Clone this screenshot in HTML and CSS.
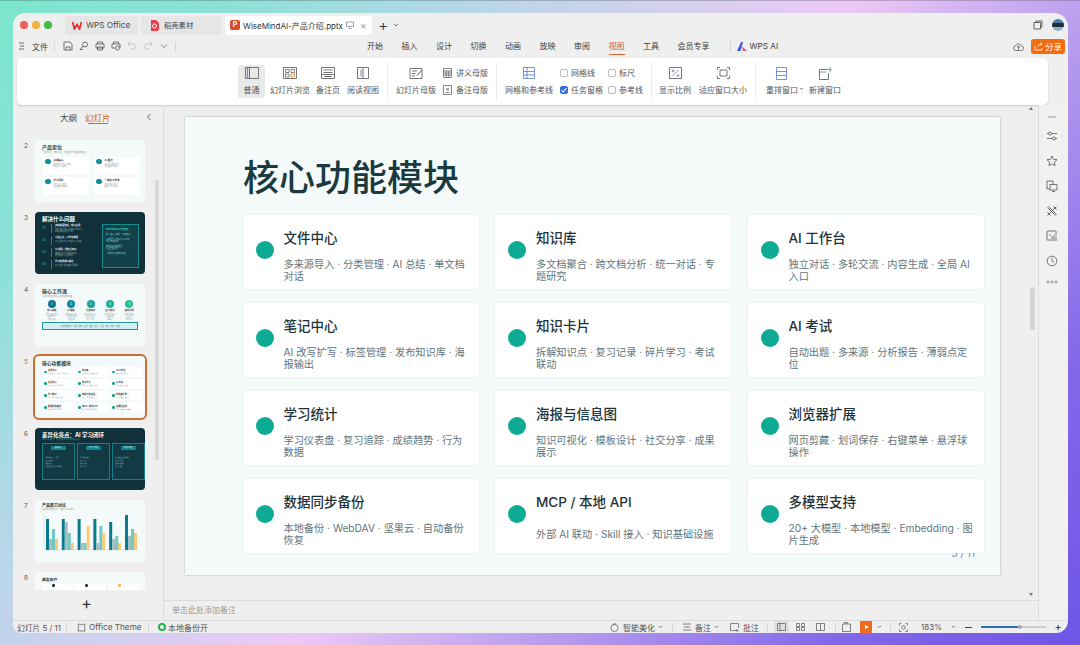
FILE: index.html
```html
<!DOCTYPE html>
<html lang="zh-CN">
<head>
<meta charset="utf-8">
<title>WiseMindAI-产品介绍.pptx</title>
<link rel="stylesheet" href="styles.css">
</head>
<body>
<div class="window">
  <header class="tabbar">
    <div class="lights"><i class="red"></i><i class="yellow"></i><i class="green"></i></div>
    <div class="tab tab-wps">
      <svg width="10" height="9" viewBox="0 0 10 9"><path d="M.5 1 2.500 8 5 3.500 7.500 8 9.500 1" fill="none" stroke="#e0322b" stroke-width="1.800"/></svg>
      <span>WPS Office</span>
    </div>
    <div class="tab tab-daoke">
      <svg width="9" height="11" viewBox="0 0 9 11"><path d="M1 0h5l3 3v6a2 2 0 0 1-2 2H1z" fill="#ec3f52"/><circle cx="4.500" cy="6" r="2" fill="none" stroke="#fff"/></svg>
      <span>稻壳素材</span>
    </div>
    <div class="tab tab-active">
      <span class="ppt-badge">P</span>
      <span class="tab-name">WiseMindAI-产品介绍.pptx</span>
      <svg width="8" height="8" viewBox="0 0 8 8"><path d="M.5 1h7v4.500h-7zM2.500 7.500h3" fill="none" stroke="#777" stroke-width=".7"/></svg>
      <span class="tab-close">×</span>
    </div>
    <span class="tab-plus">+</span>
    <svg class="caret" width="6" height="4" viewBox="0 0 6 4"><path d="M1 1l2 2 2-2" fill="none" stroke="#555" stroke-width=".8"/></svg>
    <div class="tabbar-end">
      <svg width="10" height="10" viewBox="0 0 10 10"><path d="M1 2.500h6.500V9H1zM3 2.500V1h6v6H7.500" fill="none" stroke="#555" stroke-width=".9"/></svg>
      <span class="avatar"></span>
    </div>
  </header>

  <nav class="menubar">
    <div class="quick">
      <svg class="hamburger" width="6" height="8" viewBox="0 0 6 8"><path d="M0 1h5M1 4h4M0 7h5" stroke="#444" stroke-width=".8"/></svg>
      <span class="file-label">文件</span>
      <i class="vsep v-file"></i>
      <svg class="qi q1" width="10" height="10" viewBox="0 0 10 10"><path d="M1 1h6l2 2v6H1zM3 9V6h4v3" fill="none" stroke="#555" stroke-width=".8"/></svg>
      <svg class="qi" width="10" height="10" viewBox="0 0 10 10"><circle cx="6" cy="3.500" r="2.500" fill="none" stroke="#555" stroke-width=".8"/><path d="M4 5 1 8.500h3" fill="none" stroke="#555" stroke-width=".8"/></svg>
      <svg class="qi" width="10" height="10" viewBox="0 0 10 10"><path d="M2.500 3V1h5v2M1 3h8v4H1zM2.500 6h5v3h-5z" fill="none" stroke="#555" stroke-width=".8"/></svg>
      <svg class="qi" width="10" height="10" viewBox="0 0 10 10"><path d="M2.500 3V1h5v2M1 3h8v4H1z" fill="none" stroke="#555" stroke-width=".8"/><circle cx="6.500" cy="7" r="2" fill="#efefef" stroke="#555" stroke-width=".8"/></svg>
      <svg class="qi" width="10" height="10" viewBox="0 0 10 10"><path d="M3 1 1 3l2 2M1 3h5a2.500 2.500 0 0 1 0 5H4" fill="none" stroke="#bbb" stroke-width=".8"/></svg>
      <svg class="qi" width="10" height="10" viewBox="0 0 10 10"><path d="M7 1l2 2-2 2M9 3H4a2.500 2.500 0 0 0 0 5h2" fill="none" stroke="#bbb" stroke-width=".8"/></svg>
      <svg class="qi" width="10" height="10" viewBox="0 0 10 10"><path d="M2 3.500l3 3 3-3" fill="none" stroke="#666" stroke-width=".8"/></svg>
      <i class="vsep v-quick"></i>
    </div>
    <div class="menus">
      <span>开始</span><span>插入</span><span>设计</span><span>切换</span><span>动画</span><span>放映</span><span>审阅</span><span class="menu-on">视图</span><span>工具</span><span>会员专享</span>
    </div>
    <i class="vsep v-ai"></i>
    <div class="wps-ai">
      <svg width="10" height="9" viewBox="0 0 10 9"><path d="M0 9 4 0h2L3.500 9z" fill="#3c5be0"/><path d="M5 4.500 10 9H6z" fill="#e94b8a"/></svg>
      <span>WPS AI</span>
    </div>
    <div class="menu-end">
      <svg width="11" height="9" viewBox="0 0 11 9"><path d="M3 8.500a2.300 2.300 0 0 1-.3-4.600 3 3 0 0 1 5.700 0 2.300 2.300 0 0 1-.3 4.600zM5.500 8V4M4 5.400 5.500 4 7 5.400" fill="none" stroke="#666" stroke-width=".8"/></svg>
      <button class="share">
        <svg width="9" height="9" viewBox="0 0 9 9"><path d="M1 4v4h7V6M4 5c0-2 1.500-3 4-3M6.500.5 8 2 6.500 3.500" fill="none" stroke="#fff" stroke-width=".8"/></svg>
        分享
      </button>
    </div>
  </nav>

  <section class="ribbon">
    <div class="rb rb-on w27">
      <svg width="14" height="12" viewBox="0 0 14 12"><path d="M.5.500h13v11H.500zM4.500.500v11" fill="none" stroke="#555" stroke-width=".8"/><path d="M2.500 1v10" stroke="#6d86d8" stroke-width="1.200"/></svg>
      <span>普通</span>
    </div>
    <div class="rb w44 ml3">
      <svg width="14" height="12" viewBox="0 0 14 12"><path d="M.5.500h13v11H.500z" fill="none" stroke="#555" stroke-width=".8"/><path d="M2.500 2.500h3.500v3H2.500zM8 2.500h3.500v3H8zM2.500 7h3.500v3H2.500z" fill="none" stroke="#555" stroke-width=".7"/><path d="M8 7h3.500v3H8z" fill="none" stroke="#d98a3a" stroke-width=".8"/></svg>
      <span>幻灯片浏览</span>
    </div>
    <div class="rb w28 ml2">
      <svg width="14" height="12" viewBox="0 0 14 12"><path d="M.5.500h13v11H.500zM2.500 3h9M2.500 5.500h9M.5 7.500h13M3 9.500h8" fill="none" stroke="#555" stroke-width=".8"/></svg>
      <span>备注页</span>
    </div>
    <div class="rb w36 ml3">
      <svg width="12" height="12" viewBox="0 0 12 12"><path d="M.5.500h11v11H.500zM6 1v10" fill="none" stroke="#555" stroke-width=".8"/><path d="M4 2.500v7" stroke="#6d86d8" stroke-width="1"/></svg>
      <span>阅读视图</span>
    </div>
    <i class="rsep ml6"></i>
    <div class="rb w44 ml6">
      <svg width="14" height="13" viewBox="0 0 14 13"><path d="M1 1.500h12v10H1zM3 4h5M3 6.500h3.500M3 9h3" fill="none" stroke="#555" stroke-width=".8"/><path d="M13 3 8 8.500" stroke="#555" stroke-width="1"/></svg>
      <span>幻灯片母版</span>
    </div>
    <div class="rb-stack ml5">
      <div class="rb-line">
        <svg width="9" height="10" viewBox="0 0 9 10"><path d="M.5.500h8v9h-8zM.5 3h8M.5 5h8M.5 7h8M3.200 3v6.500M5.800 3v6.500" fill="none" stroke="#555" stroke-width=".7"/></svg>
        <span>讲义母版</span>
      </div>
      <div class="rb-line">
        <svg width="9" height="10" viewBox="0 0 9 10"><path d="M.5.500h8v9h-8zM2.500 7.500h4" fill="none" stroke="#555" stroke-width=".7"/><path d="M3 3h3v2.500H3z" fill="#aaa"/></svg>
        <span>备注母版</span>
      </div>
    </div>
    <i class="rsep ml8"></i>
    <div class="rb w50 ml7">
      <svg width="12" height="12" viewBox="0 0 12 12"><path d="M.5.500h11v11H.500zM.5 4.500h11M.5 8h11M4 .5v11" fill="none" stroke="#5577cc" stroke-width=".8"/></svg>
      <span>网格和参考线</span>
    </div>
    <div class="checks ml6">
      <label class="ck"><i class="box"></i>网格线</label>
      <label class="ck"><i class="box box-on"><svg width="8" height="8" viewBox="0 0 8 8"><path d="M1.500 4 3.300 6 6.500 2" fill="none" stroke="#fff" stroke-width="1.100"/></svg></i>任务窗格</label>
    </div>
    <div class="checks ml5">
      <label class="ck"><i class="box"></i>标尺</label>
      <label class="ck"><i class="box"></i>参考线</label>
    </div>
    <i class="rsep ml8"></i>
    <div class="rb w34 ml6">
      <svg width="13" height="12" viewBox="0 0 13 12"><path d="M.5.500h12v11H.500z" fill="none" stroke="#555" stroke-width=".8"/><path d="M3.500 9 9.500 3" stroke="#5577cc" stroke-width=".8"/><circle cx="4" cy="4" r="1" fill="none" stroke="#555" stroke-width=".6"/><circle cx="9" cy="8.500" r="1" fill="none" stroke="#555" stroke-width=".6"/></svg>
      <span>显示比例</span>
    </div>
    <div class="rb w50 ml6">
      <svg width="13" height="12" viewBox="0 0 13 12"><path d="M.5 3V.5H3M10 .5h2.500V3M12.500 9v2.500H10M3 11.500H.5V9M3 3h7v6H3z" fill="none" stroke="#555" stroke-width=".8"/></svg>
      <span>适应窗口大小</span>
    </div>
    <i class="rsep ml7"></i>
    <div class="rb w42 ml8">
      <svg class="rb-shift" width="11" height="13" viewBox="0 0 11 13"><path d="M.5.500h10v12H.500z" fill="none" stroke="#5577cc" stroke-width=".8"/><path d="M.5 4.500h10M.5 8.500h10" stroke="#5577cc" stroke-width=".8"/></svg>
      <span class="rb-caret">重排窗口<svg width="5" height="4" viewBox="0 0 5 4"><path d="M1 1l1.500 1.500L4 1" fill="none" stroke="#555" stroke-width=".7"/></svg></span>
    </div>
    <div class="rb w34 ml2">
      <svg width="13" height="13" viewBox="0 0 13 13"><path d="M9 2.500H.5v10h9V6" fill="none" stroke="#555" stroke-width=".8"/><path d="M.5 5h7M11 0v5M8.500 2.500h4.500" stroke="#3aa66b" stroke-width=".8"/></svg>
      <span>新建窗口</span>
    </div>
  </section>

  <main class="main">
    <aside class="sidebar">
      <div class="side-head">
        <span>大纲</span><span class="side-on">幻灯片</span>
        <svg class="side-back" width="6" height="8" viewBox="0 0 6 8"><path d="M4.500 1 1.500 4l3 3" fill="none" stroke="#555" stroke-width=".9"/></svg>
      </div>
      <div class="side-scroll"></div>
      <div class="thumbs">
        <div class="trow"><span class="tnum">2</span>
          <div class="thumb light">
            <b class="t-title">产品定位</b>
            <p class="t-sub">一站式学习、知识管理、内容生成与考试训练平台</p>
            <div class="t2-grid">
              <div class="t2-card"><i></i><div><b>多源输入</b><p>本地文件 网页 笔记<br>知识库 AI 总结</p></div></div>
              <div class="t2-card"><i></i><div><b>AI 能力</b><p>多模型 本地模型<br>内容生成 考试</p></div></div>
              <div class="t2-card"><i></i><div><b>学习闭环</b><p>卡片 复习 统计<br>成绩趋势 薄弱点</p></div></div>
              <div class="t2-card"><i></i><div><b>一体化工作流</b><p>收集 整理 学习<br>输出 分享 备份</p></div></div>
            </div>
          </div>
        </div>
        <div class="trow"><span class="tnum">3</span>
          <div class="thumb dark">
            <b class="t-title t-white">解决什么问题</b>
            <div class="t3-body">
              <div class="t3-list">
                <div class="t3-row"><em>01</em><div><b>资料散落各处，难以复用</b><p>文件 笔记 网页分散在不同工具<br>查找和整理耗费时间</p></div></div>
                <div class="t3-row"><em>02</em><div><b>工具太多，工作流断裂</b><p>阅读 总结 学习 考试 分享 切换</p></div></div>
                <div class="t3-row"><em>03</em><div><b>AI 通用，但缺乏知识</b><p>通用模型不了解你的资料<br>结果难以沉淀为知识</p></div></div>
                <div class="t3-row"><em>04</em><div><b>学习效果难以量化</b><p>复习进度 成绩趋势 薄弱点</p></div></div>
              </div>
              <div class="t3-box"><b>WiseMindAI 的答案</b><p>把「资料」变成「可用知识」</p><p>多来源聚合 知识库 AI 对话<br>卡片 考试 统计</p><p>本地优先 数据安全<br>模型自由选择</p><p>一站式学习和知识平台</p></div>
            </div>
          </div>
        </div>
        <div class="trow"><span class="tnum">4</span>
          <div class="thumb light">
            <b class="t-title">核心工作流</b>
            <p class="t-sub">从资料收集到知识沉淀的完整链路</p>
            <div class="t4-flow">
              <div class="t4-step"><i class="c1">1</i><b>导入资料</b><p>文件 网页 笔记<br>多来源导入<br>自动分类</p></div>
              <div class="t4-step"><i class="c2">2</i><b>AI 解析</b><p>总结 提取 标签<br>单文档对话<br>内容生成</p></div>
              <div class="t4-step"><i class="c3">3</i><b>沉淀知识</b><p>知识库 知识卡片<br>多文档分析<br>统一对话</p></div>
              <div class="t4-step"><i class="c4">4</i><b>复习考试</b><p>自动出题 复习<br>分析报告<br>薄弱点</p></div>
              <div class="t4-step"><i class="c5">5</i><b>输出分享</b><p>海报 信息图<br>社交分享<br>成果展示</p></div>
            </div>
            <div class="t4-note">AI 贯穿全流程：对话、总结、出题、生成、检索、分析、润色、翻译、海报</div>
          </div>
        </div>
        <div class="trow"><span class="tnum tnum-on">5</span>
          <div class="thumb light thumb-on">
            <b class="t-title t5-title">核心功能模块</b>
            <div class="t5-grid">
              <div class="t5-card"><i></i><div><b>文件中心</b><p>多来源导入 分类管理 AI 总结</p></div></div>
              <div class="t5-card"><i></i><div><b>知识库</b><p>多文档聚合 跨文档分析</p></div></div>
              <div class="t5-card"><i></i><div><b>AI 工作台</b><p>独立对话 多轮交流</p></div></div>
              <div class="t5-card"><i></i><div><b>笔记中心</b><p>AI 改写扩写 标签管理</p></div></div>
              <div class="t5-card"><i></i><div><b>知识卡片</b><p>拆解知识点 复习记录</p></div></div>
              <div class="t5-card"><i></i><div><b>AI 考试</b><p>自动出题 多来源</p></div></div>
              <div class="t5-card"><i></i><div><b>学习统计</b><p>学习仪表盘 复习追踪</p></div></div>
              <div class="t5-card"><i></i><div><b>海报与信息图</b><p>知识可视化 模板设计</p></div></div>
              <div class="t5-card"><i></i><div><b>浏览器扩展</b><p>网页剪藏 划词保存</p></div></div>
              <div class="t5-card"><i></i><div><b>数据同步备份</b><p>本地备份 WebDAV</p></div></div>
              <div class="t5-card"><i></i><div><b>MCP / 本地 API</b><p>外部 AI 联动 Skill 接入</p></div></div>
              <div class="t5-card"><i></i><div><b>多模型支持</b><p>20+ 大模型 本地模型</p></div></div>
            </div>
          </div>
        </div>
        <div class="trow"><span class="tnum">6</span>
          <div class="thumb dark">
            <b class="t-title t-white t6-title">差异化亮点：AI 学习闭环</b>
            <p class="t-sub t6-sub">从输入到输出，形成完整的学习和知识闭环</p>
            <div class="t6-cols">
              <div class="t6-col"><span>资料输入</span><p>本地文件 网页 笔记<br>多来源聚合<br>智能分类<br>支持多种格式 自动解析</p></div>
              <div class="t6-col"><span>学习与理解</span><p>AI 对话 总结<br>知识卡片<br>复习记录<br>碎片学习</p></div>
              <div class="t6-col"><span>考试与输出</span><p>自动出题 分析报告<br>薄弱点定位<br>海报 信息图<br>社交分享</p></div>
            </div>
          </div>
        </div>
        <div class="trow"><span class="tnum">7</span>
          <div class="thumb light">
            <b class="t-title t7-title">产品能力对比</b>
            <p class="t-sub">综合能力维度对比，数据为示意评分</p>
            <svg class="t7-chart" width="100" height="42" viewBox="5 0 100 42">
              <path d="M7 1v36h94" fill="none" stroke="#bcc" stroke-width=".4"/>
              <g fill="#0b7a8c"><rect x="9" y="6" width="3" height="31"/><rect x="24.800" y="6" width="3" height="31"/><rect x="40.600" y="6" width="3" height="31"/><rect x="56.400" y="6" width="3" height="31"/><rect x="72.200" y="9" width="3" height="28"/><rect x="88" y="2" width="3" height="35"/></g>
              <g fill="#a3bfc4"><rect x="12" y="26" width="3" height="11"/><rect x="27.800" y="9" width="3" height="28"/><rect x="43.600" y="30" width="3" height="7"/><rect x="59.400" y="30" width="3" height="7"/><rect x="75.200" y="26" width="3" height="11"/><rect x="91" y="23" width="3" height="14"/></g>
              <g fill="#6fcac2"><rect x="15" y="16" width="3" height="21"/><rect x="30.800" y="20" width="3" height="17"/><rect x="46.600" y="30" width="3" height="7"/><rect x="62.400" y="13" width="3" height="24"/><rect x="78.200" y="23" width="3" height="14"/><rect x="94" y="16" width="3" height="21"/></g>
              <g fill="#f8ca7e"><rect x="18" y="26" width="3" height="11"/><rect x="33.800" y="30" width="3" height="7"/><rect x="49.600" y="13" width="3" height="24"/><rect x="65.200" y="20" width="3" height="17"/><rect x="81" y="30" width="3" height="7"/><rect x="97" y="20" width="3" height="17"/></g>
            </svg>
          </div>
        </div>
        <div class="trow"><span class="tnum">8</span>
          <div class="thumb light">
            <b class="t-title t8-title">典型用户</b>
            <div class="t8-cards"><div><i class="d-navy"></i></div><div><i class="d-navy"></i></div><div><i class="d-gold"></i></div></div>
          </div>
        </div>
      </div>
      <div class="side-add">+</div>
    </aside>

    <div class="center">
      <div class="stage">
        <span class="s-arrow s-up"></span>
        <span class="s-thumb"></span>
        <span class="s-arrow s-down"></span>
        <article class="slide">
          <h1>核心功能模块</h1>
          <span class="page-no">5 / 11</span>
          <div class="grid">
            <div class="card"><i class="dot"></i><div class="ctext"><h2>文件中心</h2><p class="desc">多来源导入 · 分类管理 · AI 总结 · 单文档对话</p></div></div>
            <div class="card"><i class="dot"></i><div class="ctext"><h2>知识库</h2><p class="desc">多文档聚合 · 跨文档分析 · 统一对话 · 专题研究</p></div></div>
            <div class="card"><i class="dot"></i><div class="ctext"><h2>AI 工作台</h2><p class="desc">独立对话 · 多轮交流 · 内容生成 · 全局 AI 入口</p></div></div>
            <div class="card"><i class="dot"></i><div class="ctext"><h2>笔记中心</h2><p class="desc">AI 改写扩写 · 标签管理 · 发布知识库 · 海报输出</p></div></div>
            <div class="card"><i class="dot"></i><div class="ctext"><h2>知识卡片</h2><p class="desc">拆解知识点 · 复习记录 · 碎片学习 · 考试联动</p></div></div>
            <div class="card"><i class="dot"></i><div class="ctext"><h2>AI 考试</h2><p class="desc">自动出题 · 多来源 · 分析报告 · 薄弱点定位</p></div></div>
            <div class="card"><i class="dot"></i><div class="ctext"><h2>学习统计</h2><p class="desc">学习仪表盘 · 复习追踪 · 成绩趋势 · 行为数据</p></div></div>
            <div class="card"><i class="dot"></i><div class="ctext"><h2>海报与信息图</h2><p class="desc">知识可视化 · 模板设计 · 社交分享 · 成果展示</p></div></div>
            <div class="card"><i class="dot"></i><div class="ctext"><h2>浏览器扩展</h2><p class="desc">网页剪藏 · 划词保存 · 右键菜单 · 悬浮球操作</p></div></div>
            <div class="card"><i class="dot"></i><div class="ctext"><h2>数据同步备份</h2><p class="desc">本地备份 · WebDAV · 坚果云 · 自动备份恢复</p></div></div>
            <div class="card"><i class="dot"></i><div class="ctext"><h2>MCP / 本地 API</h2><p class="desc">外部 AI 联动 · Skill 接入 · 知识基础设施</p></div></div>
            <div class="card"><i class="dot"></i><div class="ctext"><h2>多模型支持</h2><p class="desc">20+ 大模型 · 本地模型 · Embedding · 图片生成</p></div></div>
          </div>
        </article>
      </div>
      <div class="notes">单击此处添加备注</div>
    </div>

    <aside class="rail">
      <svg width="10" height="2" viewBox="0 0 10 2"><path d="M1 1h8" stroke="#999" stroke-width="1"/></svg>
      <svg width="12" height="12" viewBox="0 0 12 12"><path d="M1 3.500h10M1 8.500h10" stroke="#555" stroke-width=".8"/><circle cx="4" cy="3.500" r="1.500" fill="#f1f1f1" stroke="#555" stroke-width=".8"/><circle cx="8" cy="8.500" r="1.500" fill="#f1f1f1" stroke="#555" stroke-width=".8"/></svg>
      <svg width="12" height="12" viewBox="0 0 12 12"><path d="M6 1l1.500 3.300 3.500.4-2.600 2.400.7 3.500L6 8.900l-3.100 1.700.7-3.500L1 4.700l3.500-.4z" fill="none" stroke="#555" stroke-width=".8"/></svg>
      <svg width="12" height="12" viewBox="0 0 12 12"><path d="M1 1h6v3M4 9H1V1M4 4.500h7V10H4zM6 11.500h3" fill="none" stroke="#555" stroke-width=".8"/></svg>
      <svg width="12" height="12" viewBox="0 0 12 12"><path d="M1.500 2.500l8 8M2.500 1.500l8 8M10.500 1.500l-9 9M7.500 1.500l3 3M1.500 7.500l3 3" fill="none" stroke="#555" stroke-width=".9"/></svg>
      <svg width="12" height="12" viewBox="0 0 12 12"><path d="M1 2q0-1 1-1h8v5M1 2v8h4" fill="none" stroke="#555" stroke-width=".8"/><path d="M6 11V6M8 11V5M10 11V7M3 5h2" stroke="#555" stroke-width=".8"/></svg>
      <svg width="12" height="12" viewBox="0 0 12 12"><circle cx="6" cy="6" r="4.800" fill="none" stroke="#555" stroke-width=".8"/><path d="M6 3v3l2 1.500" fill="none" stroke="#555" stroke-width=".8"/></svg>
      <svg width="12" height="4" viewBox="0 0 12 4"><circle cx="2" cy="2" r="1.100" fill="none" stroke="#666" stroke-width=".6"/><circle cx="6" cy="2" r="1.100" fill="none" stroke="#666" stroke-width=".6"/><circle cx="10" cy="2" r="1.100" fill="none" stroke="#666" stroke-width=".6"/></svg>
    </aside>
  </main>

  <footer class="status">
    <span class="st-count">幻灯片 5 / 11</span>
    <i class="st-sep"></i>
    <svg class="st-theme" width="9" height="9" viewBox="0 0 9 9"><path d="M1 1.500 3 1l1.500 1L6 1l2 .5L7.500 4 8 8H1l.5-4z" fill="none" stroke="#555" stroke-width=".7"/></svg>
    <span class="st-office">Office Theme</span>
    <i class="st-sep st-s2"></i>
    <i class="st-green"></i>
    <span class="st-backup">本地备份开</span>
    <div class="st-right">
      <svg width="9" height="9" viewBox="0 0 9 9"><circle cx="4.500" cy="5" r="3.600" fill="none" stroke="#555" stroke-width=".7"/><path d="M3 1h3" stroke="#555" stroke-width=".7"/></svg>
      <span class="st-a">智能美化</span>
      <svg class="st-car" width="5" height="4" viewBox="0 0 5 4"><path d="M1 1l1.500 1.500L4 1" fill="none" stroke="#555" stroke-width=".7"/></svg>
      <i class="st-sep st-s3"></i>
      <svg class="st-b" width="8" height="8" viewBox="0 0 8 8"><path d="M0 1h8M1 4h6M0 7h8" stroke="#555" stroke-width=".7"/></svg>
      <span class="st-a">备注</span>
      <svg class="st-car" width="5" height="4" viewBox="0 0 5 4"><path d="M1 1l1.500 1.500L4 1" fill="none" stroke="#555" stroke-width=".7"/></svg>
      <svg class="st-c" width="9" height="9" viewBox="0 0 9 9"><path d="M6 7.500H.5v-7h8V5M7 6v3M5.500 7.500h3" fill="none" stroke="#555" stroke-width=".7"/></svg>
      <span class="st-a">批注</span>
      <i class="st-sep st-s4"></i>
      <span class="st-view"><svg width="9" height="8" viewBox="0 0 9 8"><path d="M.5.500h8v7h-8zM3 .5v7" fill="none" stroke="#555" stroke-width=".7"/></svg></span>
      <svg class="st-d" width="9" height="8" viewBox="0 0 9 8"><path d="M.5.500h3v3h-3zM5.500.5h3v3h-3zM.5 4.500h3v3h-3zM5.500 4.500h3v3h-3z" fill="none" stroke="#555" stroke-width=".7"/></svg>
      <svg class="st-d2" width="9" height="8" viewBox="0 0 9 8"><path d="M.5.500h8v7h-8zM4.500 1v6" fill="none" stroke="#555" stroke-width=".7"/></svg>
      <i class="st-sep st-s5"></i>
      <svg class="st-e" width="9" height="10" viewBox="0 0 9 10"><path d="M.5 2h8v7.500h-8zM2.500 2V.5h3V2" fill="none" stroke="#555" stroke-width=".7"/></svg>
      <span class="st-play"></span>
      <svg class="st-car2" width="5" height="4" viewBox="0 0 5 4"><path d="M1 1l1.500 1.500L4 1" fill="none" stroke="#555" stroke-width=".7"/></svg>
      <i class="st-sep st-s6"></i>
      <svg class="st-f" width="9" height="9" viewBox="0 0 9 9"><path d="M.5 2.500v-2h2M6.500.5h2v2M8.500 6.500v2h-2M2.500 8.500h-2v-2" fill="none" stroke="#555" stroke-width=".7"/><circle cx="4.500" cy="4.500" r="1.800" fill="none" stroke="#555" stroke-width=".7"/></svg>
      <span class="st-zoom">183%</span>
      <svg class="st-car3" width="5" height="4" viewBox="0 0 5 4"><path d="M1 1l1.500 1.500L4 1" fill="none" stroke="#555" stroke-width=".7"/></svg>
      <span class="st-minus"></span>
      <span class="slider"><b></b><i></i></span>
      <span class="st-plus">+</span>
    </div>
  </footer>
</div>
</body>
</html>
```
FILE: styles.css
```css
* { box-sizing: border-box; margin: 0; padding: 0; }
html, body { width: 1080px; height: 645px; overflow: hidden; }
body {
  padding: 13px 12px 12px 13px;
  background: linear-gradient(131deg, #7be6cd 0%, #8fe0d8 15%, #b9d6ea 30%, #ecc9f5 52%, #b69bee 68%, #8268ea 85%, #6f55e6 100%);
  box-shadow: inset 0 1px 0 rgba(0,0,0,.18);
  font-family: Inter, "Noto Sans CJK SC", sans-serif;
  color: #444;
}
i, em { font-style: normal; display: block; }
p { margin: 0; }
svg { display: block; flex: none; }

.window {
  width: 1055px; height: 620px;
  background: #efefef;
  border-radius: 12px 14px 12px 8px;
  overflow: hidden;
  display: flex; flex-direction: column;
}

/* title bar */
.tabbar { height: 23px; padding: 1px 4px 0 7px; display: flex; align-items: center; font-size: 8.200px; flex: none; }
.lights { display: flex; gap: 4.700px; width: 45px; }
.lights i { width: 7.500px; height: 7.500px; border-radius: 50%; }
.red { background: #ec5f5b; }
.yellow { background: #f2b33c; }
.green { background: #44bb48; }
.tab { height: 19px; border-radius: 4px; display: flex; align-items: center; background: #e6e6e6; }
.tab-wps { width: 73px; padding-left: 7px; gap: 4px; color: #4a4a4a; }
.tab-daoke { width: 81px; margin-left: 3px; padding-left: 9px; gap: 5px; font-size: 7.300px; }
.tab-active { width: 147px; margin-left: 3px; padding-left: 5px; background: #fff; color: #333; }
.ppt-badge { width: 10px; height: 10px; border-radius: 2px; background: #dc4a2b; color: #fff; font-size: 7px; line-height: 10px; text-align: center; font-weight: 700; }
.tab-name { margin-left: 3px; width: 103px; white-space: nowrap; font-size: 8px; }
.tab-close { margin-left: 6px; color: #999; font-size: 10px; line-height: 1; }
.tab-plus { margin-left: 6px; font-size: 16px; line-height: 1; color: #333; font-weight: 300; }
.caret { margin-left: 5px; }
.tabbar-end { margin-left: auto; display: flex; align-items: center; gap: 9px; }
.avatar { width: 12px; height: 12px; border-radius: 50%; background: linear-gradient(#4b7fa8 0 35%, #1f2d3d 35% 70%, #8fb1c6 70%); }

/* menu bar */
.menubar { height: 21px; flex: none; display: flex; align-items: center; font-size: 8px; padding: 0 0 1px 6px; color: #3d3d3d; }
.quick { width: 348px; display: flex; align-items: center; }
.file-label { margin-left: 7px; width: 16px; white-space: nowrap; }
.vsep { width: 1px; height: 9px; background: #d6d6d6; }
.v-file { margin-left: 6px; }
.qi { margin-left: 6px; }
.q1 { margin-left: 8px; }
.v-quick { margin-left: 6px; }
.menus { display: flex; gap: 18.500px; }
.menus span { white-space: nowrap; position: relative; line-height: 21px; }
.menu-on { color: #d4602a; }
.menu-on::after { content: ""; position: absolute; left: 0; right: 0; bottom: 2px; height: 1px; background: #d4602a; }
.v-ai { margin-left: 20px; height: 12px; }
.wps-ai { display: flex; align-items: center; gap: 3px; margin-left: 6px; font-size: 8.200px; }
.menu-end { margin-left: auto; display: flex; align-items: center; gap: 7px; }
.share { width: 34px; height: 15px; border: 0; border-radius: 3px; background: #f26c12; color: #fff; font: inherit; font-size: 8.500px; display: flex; align-items: center; justify-content: center; gap: 2px; margin-right: 3px; }

/* ribbon */
.ribbon { height: 47px; margin: 1px 20px 0 4px; flex: none; background: #fff; border-radius: 5px; box-shadow: 0 1px 2px rgba(0,0,0,.16); padding: 0 0 1px 221px; display: flex; align-items: center; font-size: 8px; color: #555; }
.rb { height: 33px; display: flex; flex-direction: column; align-items: center; justify-content: space-between; padding: 2px 0 3px; white-space: nowrap; flex: none; border-radius: 3px; }
.rb-on { background: #e9e9e9; }
.rb-caret { display: flex; align-items: center; gap: 1px; }
.rb-shift { margin-right: 7px; }
.w27 { width: 27px; } .w28 { width: 28px; } .w34 { width: 34px; } .w36 { width: 36px; } .w42 { width: 42px; } .w44 { width: 44px; } .w50 { width: 50px; }
.ml2 { margin-left: 2px; } .ml3 { margin-left: 3px; } .ml5 { margin-left: 5px; } .ml6 { margin-left: 6px; } .ml7 { margin-left: 7px; } .ml8 { margin-left: 8px; }
.rsep { width: 1px; height: 39px; background: #ececec; flex: none; }
.rb-stack, .checks { display: flex; flex-direction: column; gap: 7px; flex: none; }
.rb-line { display: flex; align-items: center; gap: 4px; white-space: nowrap; height: 10px; }
.ck { display: flex; align-items: center; gap: 3px; height: 10px; white-space: nowrap; }
.box { width: 8px; height: 8px; border: 1px solid #bbb; border-radius: 2px; background: #fff; }
.box-on { background: #2f6fdf; border-color: #2f6fdf; position: relative; }
.box-on svg { margin: -1px; }

/* main */
.main { flex: 1; min-height: 0; display: flex; }
.sidebar { width: 151px; flex: none; border-right: 1px solid #dedede; display: flex; flex-direction: column; position: relative; }
.side-head { height: 27px; flex: none; padding: 0 0 3px 47px; display: flex; align-items: center; gap: 8px; font-size: 8.500px; color: #444; position: relative; }
.side-on { color: #c96a30; position: relative; }
.side-on::after { content: ""; position: absolute; left: 3px; right: 3px; bottom: -1px; height: 1px; background: #c96a30; }
.side-back { margin-left: 27px; }
.side-scroll { position: absolute; left: 142px; top: 75px; width: 4px; height: 280px; border-radius: 2px; background: #d8d8d8; }
.thumbs { flex: 1; min-height: 0; overflow: hidden; padding: 8px 0 0 11px; display: flex; flex-direction: column; gap: 10px; }
.trow { display: flex; flex: none; }
.tnum { width: 11px; padding-top: 2px; font-size: 6.500px; color: #555; }
.tnum-on { color: #c96a30; }
.side-add { height: 30px; flex: none; text-align: center; font-size: 16px; line-height: 26px; color: #333; padding-right: 3px; }

/* thumbnails */
.thumb { width: 110px; height: 62px; flex: none; border-radius: 4px; padding: 4px 6px 0 7px; overflow: hidden; position: relative; font-size: 2px; line-height: 2.500px; color: #8f9ea1; }
.thumb p { white-space: nowrap; }
.light { background: #f3faf9; }
.dark { background: #10303a; color: #8fb1b5; }
.thumb-on { outline: 2px solid #c9702f; outline-offset: .5px; }
.t-title { display: block; font-size: 5px; line-height: 7px; color: #1d3a40; font-weight: 700; white-space: nowrap; }
.t-white { color: #fff; font-size: 5.500px; }
.t-sub { font-size: 2px; line-height: 3px; color: #8a9a9d; }
.t2-grid { display: grid; grid-template-columns: 46px 46px; gap: 2px 5px; margin-top: 2.500px; margin-left: 1px; }
.t2-card { height: 18px; background: #fff; display: flex; gap: 3px; padding: 2px; border-radius: 1px; }
.t2-card i { width: 5.500px; height: 5.500px; border-radius: 50%; background: #0f8f9f; flex: none; }
.t2-card b { display: block; font-size: 2.500px; line-height: 4px; color: #333; }
.t3-body { display: flex; margin-top: 1px; }
.t3-list { width: 61px; display: flex; flex-direction: column; gap: 3px; }
.t3-row { display: flex; height: 9px; }
.t3-row em { width: 9px; font-size: 3.500px; line-height: 8px; color: #2cb6a8; }
.t3-row div { border-left: 1px solid #3a7c85; padding-left: 3px; }
.t3-row b { display: block; font-size: 2.300px; line-height: 3.500px; color: #eef; white-space: nowrap; }
.t3-box { width: 38px; height: 44px; border: 1px solid #168a8f; background: #123f48; padding: 3px 3px; display: flex; flex-direction: column; gap: 2px; color: #9cc; }
.t3-box b { font-size: 2.500px; line-height: 3px; color: #35c8b2; white-space: nowrap; }
.t4-flow { display: flex; margin-top: 2px; }
.t4-step { width: 21.200px; display: flex; flex-direction: column; align-items: center; text-align: center; }
.t4-step i { width: 8px; height: 8px; border-radius: 50%; color: #fff; font-size: 3px; line-height: 8px; }
.t4-step b { font-size: 2.300px; line-height: 5px; color: #333; }
.t4-step p { font-size: 1.800px; line-height: 2.300px; }
.c1 { background: #0b7a95; } .c2 { background: #0f8c9e; } .c3 { background: #12a0a0; } .c4 { background: #1bb09a; } .c5 { background: #25bf94; }
.t4-note { width: 96px; height: 8px; margin-top: 2px; background: #d2eef0; border: 1px solid #22909f; font-size: 1.800px; line-height: 6px; text-align: center; white-space: nowrap; overflow: hidden; color: #3c7c86; }
.t5-title { font-size: 4.800px; }
.t5-grid { display: grid; grid-template-columns: repeat(3, 31.500px); grid-auto-rows: 9.700px; gap: 2.200px 2.500px; margin-left: 1px; }
.t5-card { background: #fff; display: flex; align-items: center; gap: 1.500px; padding-left: 1px; overflow: hidden; }
.t5-card i { width: 2.500px; height: 2.500px; border-radius: 50%; background: #0fa98c; flex: none; }
.t5-card b { display: block; font-size: 2.200px; line-height: 3px; color: #333; white-space: nowrap; }
.t5-card p { font-size: 1.600px; line-height: 2px; }
.t6-title { line-height: 6px; }
.t6-sub { color: #2b9a90; }
.t6-cols { display: flex; gap: 2.500px; margin-top: 2px; }
.t6-col { width: 32.500px; height: 37px; flex: none; border: 1px solid #137f88; background: #123a44; padding-top: 2px; text-align: center; overflow: hidden; }
.t6-col span { display: block; width: 15px; height: 3.500px; margin: 0 auto 6px; background: #12808a; color: #d9f3f0; font-size: 1.800px; line-height: 3.500px; white-space: nowrap; }
.t6-col p { font-size: 1.700px; line-height: 3px; text-align: left; padding-left: 2px; }
.t7-title { font-size: 4px; line-height: 5px; margin-top: -1px; }
.t7-chart { margin-top: 2px; }
.t8-title { font-size: 3.800px; line-height: 6px; margin-top: 1px; }
.t8-cards { display: flex; gap: 2px; margin-top: 1px; }
.t8-cards div { width: 31px; height: 20px; background: #fff; padding: 0 0 0 10px; }
.t8-cards i { width: 2.500px; height: 2.500px; border-radius: 50%; }
.d-navy { background: #234; }
.d-gold { background: #f2b63c; }

/* center */
.center { flex: 1; min-width: 0; display: flex; flex-direction: column; }
.stage { flex: 1; min-height: 0; padding: 12px 21px 0 21px; position: relative; }
.s-thumb { position: absolute; right: 3px; top: 182px; width: 5px; height: 43px; border-radius: 3px; background: #d4d4d4; }
.s-arrow { position: absolute; right: 5px; width: 0; height: 0; border-left: 2px solid transparent; border-right: 2px solid transparent; }
.s-up { top: 2px; border-bottom: 3px solid #777; }
.s-down { bottom: 4px; border-top: 3px solid #777; }
.slide { width: 815px; height: 458px; background: #f3faf9; box-shadow: 0 0 2px rgba(0,0,0,.3); padding: 37px 0 0 57px; position: relative; }
.slide h1 { font-size: 36px; line-height: 42px; font-weight: 500; color: #1b3a40; margin-bottom: 19px; margin-left: 1px; font-family: "Noto Sans CJK SC", sans-serif; }
.page-no { position: absolute; right: 25px; top: 430px; font-size: 10px; line-height: 12px; color: #78868a; }
.grid { display: grid; grid-template-columns: repeat(3, 236px); grid-auto-rows: 74px; gap: 14px 16.500px; position: relative; margin-left: .5px; }
.card { background: #fff; border-radius: 3px; box-shadow: 0 0 2px rgba(20,110,110,.16); display: flex; padding: 26px 0 0 13px; position: relative; }
.dot { width: 18px; height: 18px; border-radius: 50%; background: #0dab93; flex: none; }
.ctext { margin-left: 10px; width: 187px; margin-top: -11px; }
.card h2 { font-size: 13.500px; line-height: 16px; font-weight: 500; color: #1d3338; white-space: nowrap; }
.desc { min-height: 24px; margin-top: 12px; font-size: 10.200px; line-height: 12px; color: #5f757c; display: flex; align-items: center; }
.notes { height: 20px; flex: none; border-top: 1px solid #dcdcdc; padding-left: 8px; font-size: 8px; line-height: 19px; color: #999; }

/* right rail */
.rail { width: 30px; flex: none; border-left: 1px solid #dcdcdc; background: #f1f1f1; display: flex; flex-direction: column; align-items: center; padding: 11px 3px 0 0; }
.rail svg { margin-bottom: 13px; }
.rail svg:first-child { margin-bottom: 12px; }

/* status bar */
.status { height: 13px; flex: none; border-top: 1px solid #dcdcdc; padding-left: 4px; display: flex; align-items: center; font-size: 8px; color: #555; white-space: nowrap; overflow: hidden; }
.st-count { width: 49px; font-size: 7.800px; }
.st-sep { width: 1px; height: 8px; background: #d4d4d4; flex: none; }
.st-theme { margin-left: 10px; }
.st-office { margin-left: 3px; width: 51px; font-size: 8.200px; }
.st-s2 { margin-left: 8px; }
.st-green { width: 8px; height: 8px; border-radius: 50%; border: 2.500px solid #23b14d; background: #fff; margin-left: 9px; }
.st-backup { margin-left: 2px; }
.st-right { margin-left: auto; display: flex; align-items: center; width: 460px; padding-left: 2px; }
.st-a { margin-left: 4px; }
.st-car { margin-left: 3px; }
.st-s3 { margin-left: 9px; }
.st-b { margin-left: 10px; }
.st-c { margin-left: 11px; }
.st-s4 { margin-left: 8px; }
.st-view { width: 15px; height: 13px; margin-left: 6px; background: #e0e0e0; display: flex; align-items: center; justify-content: center; }
.st-d { margin-left: 7px; }
.st-d2 { margin-left: 11px; }
.st-s5 { margin-left: 10px; }
.st-e { margin-left: 6px; }
.st-play { width: 12px; height: 12px; margin-left: 9px; border-radius: 1px; background: #ee6a1e; position: relative; }
.st-play::after { content: ""; position: absolute; left: 5px; top: 4px; border-left: 4px solid #fff; border-top: 2px solid transparent; border-bottom: 2px solid transparent; }
.st-car2 { margin-left: 5px; }
.st-s6 { margin-left: 8px; }
.st-f { margin-left: 8px; }
.st-zoom { margin-left: 13px; width: 22px; }
.st-car3 { margin-left: 8px; }
.st-minus { width: 7px; height: 1px; background: #444; margin-left: 8.500px; }
.slider { width: 65px; height: 2px; margin-left: 9.500px; background: #ccc; display: block; position: relative; }
.slider b { display: block; width: 37px; height: 2px; background: #2b6fb8; }
.slider i { position: absolute; left: 37px; top: -1px; width: 4px; height: 4px; border-radius: 50%; background: #aaa; }
.st-plus { margin-left: 8.500px; font-size: 11px; color: #333; line-height: 1; }
```
